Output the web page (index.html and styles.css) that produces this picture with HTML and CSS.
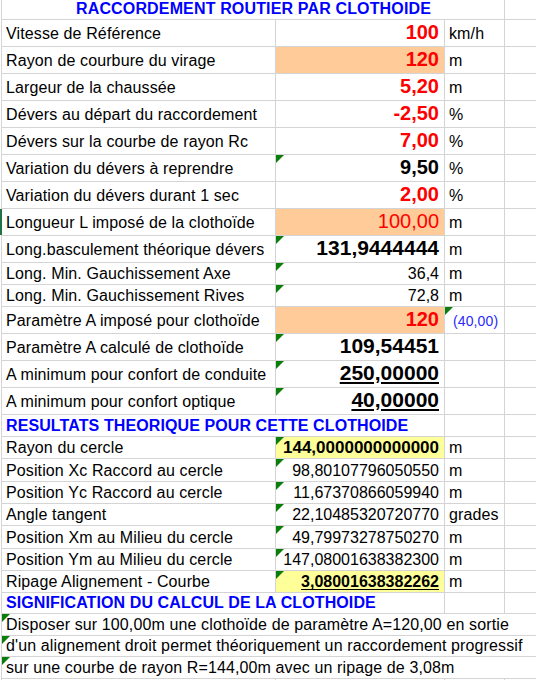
FILE: index.html
```html
<!DOCTYPE html>
<html lang="fr">
<head>
<meta charset="utf-8">
<title>Raccordement routier par clothoïde</title>
<link rel="stylesheet" href="styles.css">
</head>
<body>
<div class="sheet">
  <div class="row r-title">
    <div class="c title span3">RACCORDEMENT ROUTIER PAR CLOTHOIDE</div>
    <div class="c"></div>
  </div>

  <div class="row r27">
    <div class="c">Vitesse de Référence</div>
    <div class="c num big bold red">100</div>
    <div class="c">km/h</div>
    <div class="c"></div>
  </div>
  <div class="row r27">
    <div class="c">Rayon de courbure du virage</div>
    <div class="c num big bold red orange">120</div>
    <div class="c">m</div>
    <div class="c"></div>
  </div>
  <div class="row r27">
    <div class="c">Largeur de la chaussée</div>
    <div class="c num big bold red">5,20</div>
    <div class="c">m</div>
    <div class="c"></div>
  </div>
  <div class="row r27">
    <div class="c">Dévers au départ du raccordement</div>
    <div class="c num big bold red">-2,50</div>
    <div class="c">%</div>
    <div class="c"></div>
  </div>
  <div class="row r27">
    <div class="c">Dévers sur la courbe de rayon Rc</div>
    <div class="c num big bold red">7,00</div>
    <div class="c">%</div>
    <div class="c"></div>
  </div>
  <div class="row r27">
    <div class="c">Variation du dévers à reprendre</div>
    <div class="c num big bold flag">9,50</div>
    <div class="c">%</div>
    <div class="c"></div>
  </div>
  <div class="row r27">
    <div class="c">Variation du dévers durant 1 sec</div>
    <div class="c num big bold red">2,00</div>
    <div class="c">%</div>
    <div class="c"></div>
  </div>
  <div class="row r27">
    <div class="c selected">Longueur L imposé de la clothoïde</div>
    <div class="c num big red orange">100,00</div>
    <div class="c">m</div>
    <div class="c"></div>
  </div>
  <div class="row r27">
    <div class="c">Long.basculement théorique dévers</div>
    <div class="c num bigger bold flag">131,9444444</div>
    <div class="c">m</div>
    <div class="c"></div>
  </div>

  <div class="row r22">
    <div class="c">Long. Min. Gauchissement Axe</div>
    <div class="c num flag">36,4</div>
    <div class="c">m</div>
    <div class="c"></div>
  </div>
  <div class="row r22">
    <div class="c">Long. Min. Gauchissement Rives</div>
    <div class="c num flag">72,8</div>
    <div class="c">m</div>
    <div class="c"></div>
  </div>

  <div class="row r27">
    <div class="c">Paramètre A imposé pour clothoïde</div>
    <div class="c num big bold red orange">120</div>
    <div class="c note flag">(40,00)</div>
    <div class="c"></div>
  </div>
  <div class="row r27">
    <div class="c">Paramètre A calculé de clothoïde</div>
    <div class="c num bigger bold flag">109,54451</div>
    <div class="c"></div>
    <div class="c"></div>
  </div>
  <div class="row r27">
    <div class="c">A minimum pour confort de conduite</div>
    <div class="c num bigger bold ul flag">250,00000</div>
    <div class="c"></div>
    <div class="c"></div>
  </div>
  <div class="row r27">
    <div class="c">A minimum pour confort optique</div>
    <div class="c num bigger bold ul flag">40,00000</div>
    <div class="c"></div>
    <div class="c"></div>
  </div>

  <div class="row r22">
    <div class="c heading span2">RESULTATS THEORIQUE POUR CETTE CLOTHOIDE</div>
    <div class="c"></div>
    <div class="c"></div>
  </div>
  <div class="row r22">
    <div class="c">Rayon du cercle</div>
    <div class="c num mid bold yellow flag">144,0000000000000</div>
    <div class="c">m</div>
    <div class="c"></div>
  </div>
  <div class="row r22">
    <div class="c">Position Xc Raccord au cercle</div>
    <div class="c num flag">98,80107796050550</div>
    <div class="c">m</div>
    <div class="c"></div>
  </div>
  <div class="row r22">
    <div class="c">Position Yc Raccord au cercle</div>
    <div class="c num flag">11,67370866059940</div>
    <div class="c">m</div>
    <div class="c"></div>
  </div>
  <div class="row r22">
    <div class="c">Angle tangent</div>
    <div class="c num flag">22,10485320720770</div>
    <div class="c">grades</div>
    <div class="c"></div>
  </div>
  <div class="row r22">
    <div class="c">Position Xm au Milieu du cercle</div>
    <div class="c num flag">49,79973278750270</div>
    <div class="c">m</div>
    <div class="c"></div>
  </div>
  <div class="row r22">
    <div class="c">Position Ym au Milieu du cercle</div>
    <div class="c num flag">147,08001638382300</div>
    <div class="c">m</div>
    <div class="c"></div>
  </div>
  <div class="row r22">
    <div class="c">Ripage Alignement - Courbe</div>
    <div class="c num bold ul1 yellow flag">3,08001638382262</div>
    <div class="c">m</div>
    <div class="c"></div>
  </div>

  <div class="row r21">
    <div class="c heading span2">SIGNIFICATION DU CALCUL DE LA CLOTHOIDE</div>
    <div class="c"></div>
    <div class="c"></div>
  </div>
  <div class="row r21">
    <div class="c span4 flag">Disposer sur 100,00m une clothoïde de paramètre A=120,00 en sortie</div>
  </div>
  <div class="row r21">
    <div class="c span4 flag">d'un alignement droit permet théoriquement un raccordement progressif</div>
  </div>
  <div class="row r21">
    <div class="c span4 flag">sur une courbe de rayon R=144,00m avec un ripage de 3,08m</div>
  </div>
  <div class="row r21">
    <div class="c"></div>
    <div class="c"></div>
    <div class="c"></div>
    <div class="c"></div>
  </div>
</div>
</body>
</html>
```

FILE: styles.css
```css
html, body {
  margin: 0;
  padding: 0;
  background: #ffffff;
  overflow: hidden;
}

body {
  width: 536px;
  height: 680px;
  font-family: "Liberation Sans", Arial, sans-serif;
  color: #000000;
}

.sheet {
  display: grid;
  grid-template-columns: 273px 168px 59px 40px;
  grid-template-rows:
    19px
    26px 26px 26px 26px 26px 26px 26px 26px 26px
    21px 21px
    26px 26px 26px 26px
    21px 21px 22px 21px 21px 22px 21px 21px
    20px 21px 20px 21px 20px;
  gap: 1px;
  background: #d4d4d4;
  margin-left: 1px;
  padding-left: 1px;
  width: max-content;
}

.row {
  display: contents;
}

.c {
  position: relative;
  background: #ffffff;
  display: flex;
  align-items: flex-end;
  padding: 0 3px 4px 4px;
  font-size: 16px;
  line-height: 1;
  white-space: nowrap;
  letter-spacing: 0.12px;
  min-width: 0;
}

.r22 > .c,
.r21 > .c,
.r-title > .c {
  padding-bottom: 2px;
}

.span2 { grid-column: span 2; }
.span3 { grid-column: span 3; }
.span4 { grid-column: span 4; }

.title {
  justify-content: center;
  font-weight: bold;
  color: #0000ff;
  letter-spacing: 0.15px;
}

.heading {
  font-weight: bold;
  color: #0000ff;
  letter-spacing: 0.1px;
}

.num {
  justify-content: flex-end;
  padding-right: 5px;
  letter-spacing: 0;
}

.big { font-size: 20px; }
.bigger { font-size: 21px; }
.mid { font-size: 17px; }
.bold { font-weight: bold; }
.red { color: #ff0000; }
.orange { background: #ffcc99; }
.yellow { background: #ffff99; }

.ul,
.ul1 {
  text-decoration: underline;
  text-decoration-thickness: 2px;
  text-underline-offset: 2px;
}

.ul1 {
  text-decoration-thickness: 1px;
}

.note {
  font-size: 14px;
  color: #2a2aff;
  padding-left: 8px;
  padding-bottom: 5px;
}

.flag::before {
  content: "";
  position: absolute;
  top: 0;
  left: 0;
  width: 0;
  height: 0;
  border-top: 8px solid #0a7d0a;
  border-right: 8px solid transparent;
}

.selected {
  box-shadow: -2px 0 0 #217346;
}
```
